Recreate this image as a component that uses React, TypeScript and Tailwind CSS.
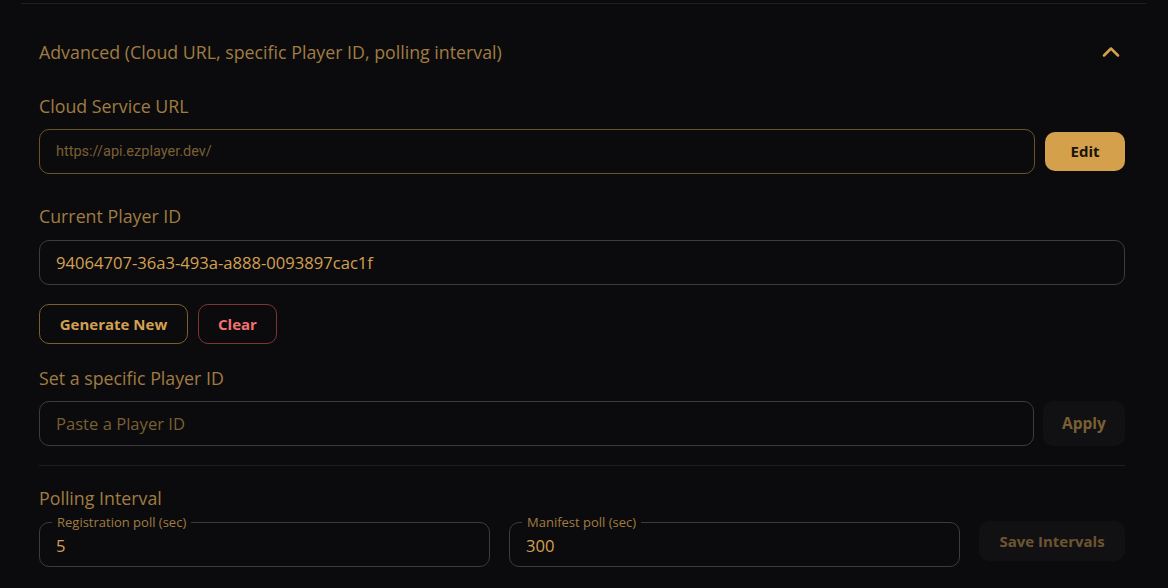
import { ChevronUp } from 'lucide-react';

const labelCls = 'text-[17.8px] leading-[24px] text-[#a07c42]';
const inputCls =
  'h-[45px] w-full rounded-[10px] border bg-transparent px-4 text-[16.6px] outline-none';

const PollField = ({ label, value }: { label: string; value: string }) => (
  <div className="relative h-[45px] flex-1 rounded-[10px] border border-[#3c3c3e]">
    <span className="absolute -top-[9px] left-[12px] bg-[#0b0b0d] px-[5px] text-[13px] leading-[16px] text-[#a07c42]">
      {label}
    </span>
    <input
      defaultValue={value}
      className="h-full w-full bg-transparent px-4 pt-[2px] text-[16.6px] text-[#d4a052] outline-none"
    />
  </div>
);

export default function App() {
  return (
    <div className="min-h-screen bg-[#0b0b0d] pt-[3px] font-['Open_Sans',sans-serif]">
      <div className="ml-[21px] w-[1125px] border-t border-[#1f1f21] pl-[18px] pr-[21px]">
        <div className="mt-[24px] flex h-[48px] items-center justify-between">
          <span className="text-[17.8px] text-[#a07c42]">
            Advanced (Cloud URL, specific Player ID, polling interval)
          </span>
          <ChevronUp size={28} strokeWidth={2.2} className="text-[#d4a04c]" />
        </div>

        <div className={`mt-[18px] ${labelCls}`}>Cloud Service URL</div>
        <div className="mt-[11px] flex items-center gap-[10px]">
          <input
            defaultValue="https://api.ezplayer.dev/"
            className={`${inputCls} flex-1 border-[#6b5229] font-['Roboto',sans-serif] !text-[14.5px] text-[#7a5f33]`}
          />
          <button className="h-[39px] w-[80px] shrink-0 rounded-[10px] bg-[#d4a04c] text-[15px] font-bold text-[#1a1408]">
            Edit
          </button>
        </div>

        <div className={`mt-[30px] ${labelCls}`}>Current Player ID</div>
        <input
          defaultValue="94064707-36a3-493a-a888-0093897cac1f"
          className={`${inputCls} mt-[12px] border-[#3c3c3e] text-[#d4a052]`}
        />
        <div className="mt-[19px] flex gap-[10px]">
          <button className="h-[40px] w-[149px] rounded-[10px] border border-[#7a5e2e] text-[15px] font-bold text-[#d4a052]">
            Generate New
          </button>
          <button className="h-[40px] w-[79px] rounded-[10px] border border-[#7f3535] text-[15px] font-bold text-[#f47171]">
            Clear
          </button>
        </div>

        <div className={`mt-[22px] ${labelCls}`}>Set a specific Player ID</div>
        <div className="mt-[11px] flex gap-[9px]">
          <input
            placeholder="Paste a Player ID"
            className={`${inputCls} flex-1 border-[#3c3c3e] text-[#d4a052] placeholder:text-[#7a5f33]`}
          />
          <button className="h-[45px] w-[82px] shrink-0 rounded-[10px] bg-[#111113] text-[15.5px] font-bold text-[#7a5f33]">
            Apply
          </button>
        </div>

        <div className="mt-[19px] h-px bg-[#1f1d17]" />

        <div className={`mt-[20px] ${labelCls}`}>Polling Interval</div>
        <div className="mt-[12px] flex items-start gap-[19px]">
          <PollField label="Registration poll (sec)" value="5" />
          <PollField label="Manifest poll (sec)" value="300" />
          <button className="-mt-px h-[40px] w-[146px] shrink-0 rounded-[10px] bg-[#111113] text-[15px] font-bold text-[#6e5530]">
            Save Intervals
          </button>
        </div>
      </div>
    </div>
  );
}
